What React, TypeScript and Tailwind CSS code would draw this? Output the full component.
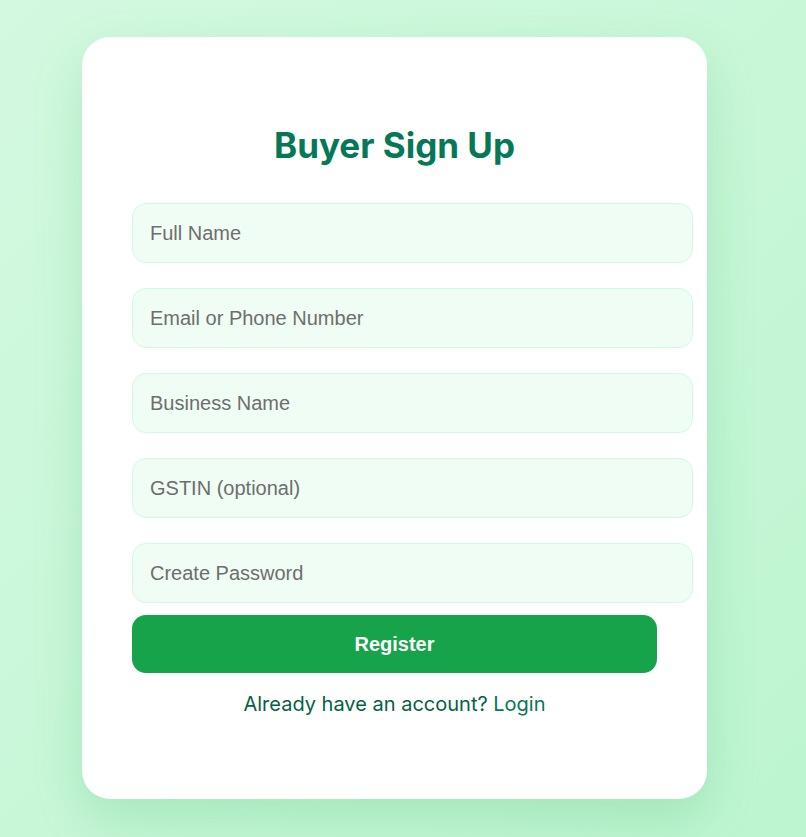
import React from "react";

const fields = [
  "Full Name",
  "Email or Phone Number",
  "Business Name",
  "GSTIN (optional)",
  "Create Password",
];

export default function App() {
  return (
    <div className="min-h-screen w-full bg-gradient-to-br from-[#d3f9e0] to-[#bdf5d0] flex items-start pt-[37px] pl-[82px]">
      <div className="w-[625px] h-[762px] bg-white rounded-[28px] shadow-[0_20px_50px_rgba(22,163,74,0.18)] px-[50px] pt-[88px] flex flex-col">
        <h2 className="text-center text-[35px] leading-[40px] font-bold text-[#047857] font-['Inter',sans-serif] mb-[38px]">
          Buyer Sign Up
        </h2>
        <form className="flex flex-col" onSubmit={(e) => e.preventDefault()}>
          {fields.map((f, i) => (
            <input
              key={f}
              type={f === "Create Password" ? "password" : "text"}
              placeholder={f}
              className={`w-[561px] h-[60px] rounded-[14px] border border-[#d1fae5] bg-[#f0fdf4] px-[17px] text-[20px] font-['Liberation_Sans',Arial,sans-serif] text-gray-800 placeholder:text-[#6e6e6e] outline-none ${
                i < fields.length - 1 ? "mb-[25px]" : "mb-[12px]"
              }`}
            />
          ))}
          <button
            type="submit"
            className="w-[525px] h-[58px] rounded-[14px] bg-[#16a34a] text-white text-[20px] font-bold font-['Liberation_Sans',Arial,sans-serif]"
          >
            Register
          </button>
        </form>
        <p className="mt-[17px] text-center text-[20px] leading-[28px] text-[#065f46] font-['Inter',sans-serif]">
          Already have an account?{" "}
          <a href="#login" className="text-[#047857]">
            Login
          </a>
        </p>
      </div>
    </div>
  );
}
